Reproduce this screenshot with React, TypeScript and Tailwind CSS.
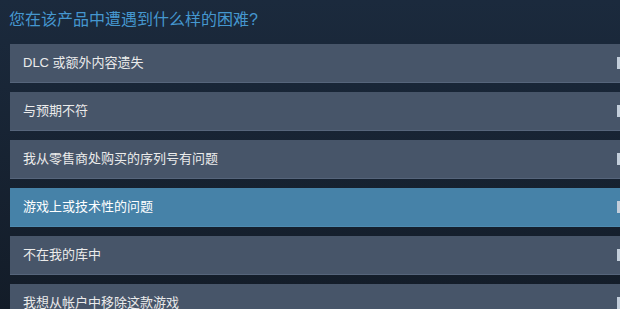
import React from "react";

const items = [
  "DLC 或额外内容遗失",
  "与预期不符",
  "我从零售商处购买的序列号有问题",
  "游戏上或技术性的问题",
  "不在我的库中",
  "我想从帐户中移除这款游戏",
];

export default function App() {
  return (
    <div
      className="w-[620px] h-[309px] overflow-hidden bg-gradient-to-b from-[#1b2a3d] to-[#131c28]"
      style={{ fontFamily: '"Liberation Sans", Arial, "Noto Sans CJK SC", sans-serif' }}
    >
      <div className="pl-[9px] pt-[8px] h-[32px] text-[16px] leading-[24px] text-[#4597cf] whitespace-nowrap">
        您在该产品中遭遇到什么样的困难?
      </div>
      <div className="mt-[12px] flex flex-col gap-[9px] pl-[10px]">
        {items.map((t, i) => (
          <div
            key={i}
            className={
              i === 3
                ? "w-[640px] h-[39px] shrink-0 flex items-center pl-[13px] pr-[21px] bg-[#4682a8] border-b border-[#4f8bb0] text-[13px] text-white"
                : "w-[640px] h-[39px] shrink-0 flex items-center pl-[13px] pr-[21px] bg-[#475569] border-b border-[#56657b] text-[13px] text-[#ebebeb]"
            }
          >
            <span className="flex-1 whitespace-nowrap">{t}</span>
            <div className="w-[12px] h-[12px] shrink-0 bg-[#c3cedb]" />
          </div>
        ))}
      </div>
    </div>
  );
}
